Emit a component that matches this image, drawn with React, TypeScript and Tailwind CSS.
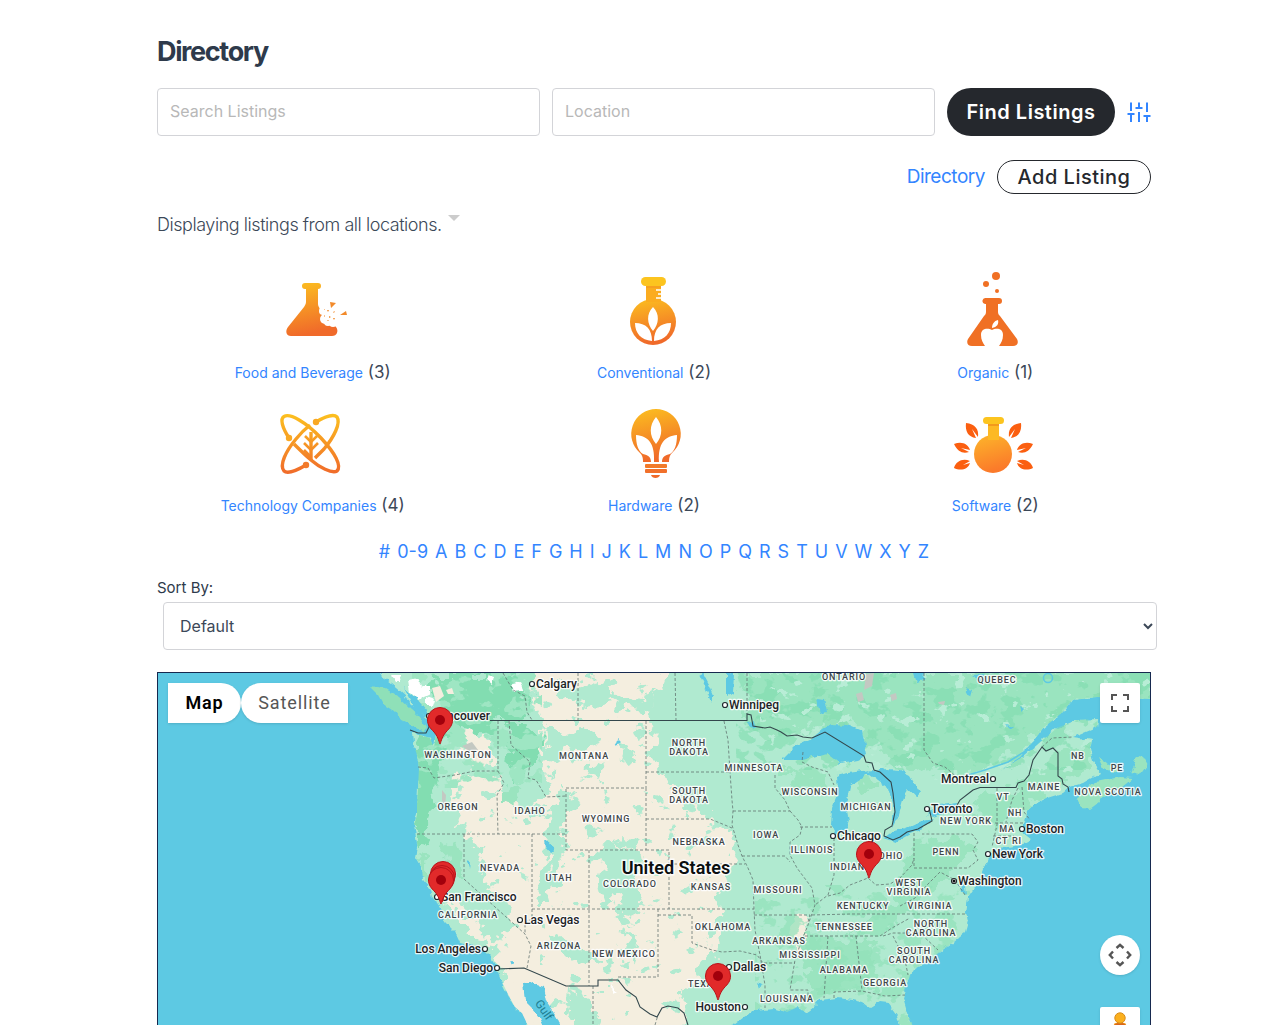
import React, { useState } from 'react';

const LETTERS = ['#', '0-9', ...'ABCDEFGHIJKLMNOPQRSTUVWXYZ'.split('')];

const FoodIcon = () => (
  <svg viewBox="0 0 100 80" className="h-20 w-[100px]" aria-hidden="true">
    <path d="M42 14h13a3 3 0 0 1 0 6v15c0 2 1 3 2 5l16 18c3 4 1 9-4 9H28c-5 0-6-5-3-9l16-20c1-2 2-3 2-5V20h-1a3 3 0 0 1 0-6z" fill="url(#gold)" />
    <g fill="#fff">
      <circle cx="60" cy="42" r="4" /><circle cx="62" cy="50" r="5" /><circle cx="68" cy="45" r="9" />
      <circle cx="70" cy="54" r="4" /><circle cx="65" cy="53" r="4" /><circle cx="60" cy="38" r="3" />
    </g>
    <g fill="#f28a2a">
      <path d="M67 33l6 1-5 5zM83 42l1 4-7 0zM64 41l2 0-1 2zM66 47l2 1-2 1zM71 42l1 1-2 1zM61 46l1 1-1 1zM70 49l2 0-1 2zM65 51l1 1-2 0zM61 40l1 1-1 0z" />
    </g>
  </svg>
);

const ConventionalIcon = () => (
  <svg viewBox="0 0 100 80" className="h-20 w-[100px]" aria-hidden="true">
    <circle cx="49" cy="53" r="23" fill="url(#gold)" />
    <path d="M42 15h15v18H42z" fill="#fbac1f" />
    <rect x="37" y="8" width="25" height="9" rx="4.5" fill="#fcc41f" />
    <path d="M42 17h15v2H42z" fill="#f6a01f" />
    <path d="M52 21h5M54 25h3M52 29h5" stroke="#fff" strokeWidth="1.6" />
    <path d="M49 38c7 7 6 17 0 24c-6-7-7-17 0-24zM31 54c11 0 17 6 17 18c-11-1-17-8-17-18zM67 54c-11 0-17 6-17 18c11-1 17-8 17-18z" fill="#fff" />
  </svg>
);

const OrganicIcon = () => (
  <svg viewBox="0 0 100 80" className="h-20 w-[100px]" aria-hidden="true">
    <g fill="#f07024">
      <circle cx="51" cy="7" r="4" /><circle cx="41" cy="15" r="3" /><circle cx="52" cy="22" r="2" />
      <path d="M41 29h13a3 3 0 0 1 0 6h-1v8c0 2 1 3 2 4l17 23c2 4 0 7-4 7H27c-4 0-6-3-4-7l16-23c1-1 2-2 2-4v-8h-1a3 3 0 0 1 1-6z" />
    </g>
    <path d="M47 61c4-2 11-2 11 5c0 5-2 8-4 11H40c-2-3-4-6-4-11c0-7 7-7 11-5zM47 59c0-4 2-7 6-8c1 4-1 7-6 8z" fill="#fff" />
  </svg>
);

const TechIcon = () => (
  <svg viewBox="0 0 100 80" className="h-20 w-[100px]" aria-hidden="true">
    <g fill="none" stroke="url(#goldPage)" strokeWidth="3.4">
      <path d="M26 36C19 25 17 17 21 14.500C27 11 43 20 58 36C72 51 79 64 74 69C69 72 56 65 48 58C42 53 36 47 31 42" />
      <path d="M53 20C63 14 71 12 74 15C78 21 71 35 61 47L52 56M43 63C33 69 24 72 21 69C16 63 23 49 33 37C37 32 42 27 47 23" />
      <path d="M48 30v28" />
      <path d="M42 34l6 6l6-6M41 41l7 7l7-7M41 48l7 7" strokeWidth="2.600" />
    </g>
    <g fill="#f9a823">
      <circle cx="53" cy="20" r="3.200" /><circle cx="26" cy="36" r="3.200" />
      <circle cx="43" cy="63" r="3.200" fill="#f27a2a" />
    </g>
  </svg>
);

const HardwareIcon = () => (
  <svg viewBox="0 0 100 80" className="h-20 w-[100px]" aria-hidden="true">
    <path d="M52 7a25 25 0 0 1 16 44c-2 2-3 4-3 9H39c0-5-1-7-3-9A25 25 0 0 1 52 7z" fill="url(#gold)" />
    <path d="M52 15c7 8 7 19 0 27c-7-8-7-19 0-27zM32 33c12 1 19 8 18 27h-3c0-5-3-7-8-8c-5-3-7-10-7-19zM73 33c-12 1-19 8-18 27h3c0-5 3-7 8-8c5-3 7-10 7-19z" fill="#fff" />
    <rect x="41" y="62" width="22" height="4" rx="1" fill="#f27a2a" />
    <rect x="41" y="67" width="22" height="4" rx="1" fill="#f1702a" />
    <path d="M47 73h9c-1 4-8 4-9 0z" fill="#f06a2a" />
  </svg>
);

const SIDE_LEAVES = 'M21 21c9 1 13 6 12 14l-6-8l4 9c-8-1-11-7-10-15zM9 42c8-3 14 0 16 6l-9-2l8 4c-6 2-11 0-15-8zM9 66c2-7 9-10 16-7l-7 4l7-2c-2 7-10 8-16 5z';

const SoftwareIcon = () => (
  <svg viewBox="0 0 100 80" className="h-20 w-[100px]" aria-hidden="true">
    <circle cx="48" cy="52" r="19" fill="url(#bright)" />
    <path d="M43 20h11v18H43z" fill="#fdb924" />
    <path d="M43 22h11v2H43z" fill="#f39a1c" />
    <rect x="38" y="15" width="21" height="7" rx="3.500" fill="#fcc41f" />
    <path d={SIDE_LEAVES} fill="#fb5f10" />
    <path d={SIDE_LEAVES} fill="#fb5f10" transform="translate(97 0) scale(-1 1)" />
  </svg>
);

const CATEGORIES = [
  { name: 'Food and Beverage', count: 3, Icon: FoodIcon },
  { name: 'Conventional', count: 2, Icon: ConventionalIcon },
  { name: 'Organic', count: 1, Icon: OrganicIcon },
  { name: 'Technology Companies', count: 4, Icon: TechIcon },
  { name: 'Hardware', count: 2, Icon: HardwareIcon },
  { name: 'Software', count: 2, Icon: SoftwareIcon },
];

// [label, centre x, baseline y]
const STATES: [string, number, number][] = [
  ['ONTARIO', 844, 680], ['QUEBEC', 997, 683], ['WASHINGTON', 458, 758], ['MONTANA', 584, 759],
  ['OREGON', 458, 810], ['IDAHO', 530, 814], ['WYOMING', 606, 822], ['NEVADA', 500, 871],
  ['UTAH', 559, 881], ['COLORADO', 630, 887], ['CALIFORNIA', 468, 918], ['ARIZONA', 559, 949],
  ['NEW MEXICO', 624, 957], ['NORTH', 689, 746], ['DAKOTA', 689, 755], ['SOUTH', 689, 794],
  ['DAKOTA', 689, 803], ['MINNESOTA', 754, 771], ['WISCONSIN', 810, 795], ['MICHIGAN', 866, 810],
  ['NEBRASKA', 699, 845], ['IOWA', 766, 838], ['ILLINOIS', 812, 853], ['INDIANA', 851, 870],
  ['OHIO', 891, 859], ['KANSAS', 711, 890], ['MISSOURI', 778, 893], ['KENTUCKY', 863, 909],
  ['OKLAHOMA', 723, 930], ['ARKANSAS', 779, 944], ['TENNESSEE', 844, 930], ['MISSISSIPPI', 810, 958],
  ['ALABAMA', 844, 973], ['GEORGIA', 885, 986], ['TEXAS', 704, 987], ['LOUISIANA', 787, 1002],
  ['WEST', 909, 886], ['VIRGINIA', 909, 895], ['VIRGINIA', 930, 909], ['NORTH', 931, 927],
  ['CAROLINA', 931, 936], ['SOUTH', 914, 954], ['CAROLINA', 914, 963], ['PENN', 946, 855],
  ['NEW YORK', 966, 824], ['VT', 1003, 800], ['NH', 1015, 816], ['MA', 1007, 832], ['CT', 1002, 844],
  ['RI', 1017, 844], ['MAINE', 1044, 790], ['NB', 1078, 759], ['PE', 1117, 771], ['NOVA SCOTIA', 1108, 795],
];

// [label, dot x, dot y, side of the dot that the label is on]
const CITIES: [string, number, number, 'start' | 'end'][] = [
  ['Calgary', 532, 684, 'start'], ['Vancouver', 429, 716, 'start'], ['Winnipeg', 725, 705, 'start'],
  ['San Francisco', 437, 897, 'start'], ['Las Vegas', 520, 920, 'start'], ['Los Angeles', 485, 949, 'end'],
  ['San Diego', 497, 968, 'end'], ['Chicago', 833, 836, 'start'], ['Toronto', 927, 809, 'start'],
  ['Montreal', 993, 779, 'end'], ['Boston', 1022, 829, 'start'], ['New York', 988, 854, 'start'],
  ['Washington', 954, 881, 'start'], ['Dallas', 729, 967, 'start'], ['Houston', 745, 1007, 'end'],
];

const PINS = [[440, 744], [443, 898], [442, 902], [441, 904], [869, 878], [718, 1000]];

const LAND =
  'M380 673L383 678L387 680L397 688L405 695L409 703L420 712L430 722L436 733L434 748L430 738L420 735L412 733L413 742L417 755L419 768L418 788L417 805L417 815L414 825L416 838L418 848L416 858L422 868L423 880L431 889L433 898L440 908L445 922L455 932L460 943L477 947L483 950L490 957L495 965L500 978L506 990L510 998L515 1007L522 1013L530 1030L545 1180L720 1180L722 1040L733 1025L743 1017L755 1010L773 1008L787 1012L798 1007L806 1013L815 1006L820 1000L837 998L853 1000L862 1002L870 1008L880 1002L888 1003L897 1015L902 1035L920 1070L924 1050L913 1025L907 1012L903 998L907 982L915 968L930 960L940 952L953 942L965 932L968 922L966 912L968 898L977 885L983 872L988 858L996 850L1007 847L1023 845L1032 840L1022 832L1025 822L1027 812L1033 805L1047 798L1063 793L1070 787L1083 783L1100 773L1093 762L1090 748L1092 740L1073 737L1097 727L1098 719L1077 720L1057 728L1037 745L1023 757L1000 770L1020 757L1033 742L1043 728L1063 712L1072 700L1097 697L1150 699L1300 699L1300 600L380 600z';

const BORDERS =
  'M410 730L418 733L426 733L429 727L428 717M490 720.5H747V714L751 715L753 726L765 728L770 727L777 730L781 732L787 736L797 735L803 737L812 738L825 732L864 756L866 762L872 763L874 770L880 772L891 782L893 793L895 812L892 826L885 830L884 836L893 840L900 837L907 832L918 829L932 821L929 808M956 807L960 800L973 790L980 787.500L1016 787.500L1018 783L1024 781L1029 775L1033 760L1042 747L1046 751L1053 748L1058 753L1058 776L1062 779L1063 784L1068 787L1069 792M497 969L524 968L566 986H598V980H618L626 990L636 997L640 1007L650 1014L657 1017L662 1008L668 1006L678 1008L684 1013L688 1025';

const STATE_LINES =
  'M418 767L428 768L434 778L455 775L475 771H498M498 721V771L504 783L497 795L498 834M417 834H566M464 834V879L525 934L531 946L527 968M532 834V909H754M532 909V919L525 922V934M589 850V986M566 788H646V850H566zM509 721L511 745L530 762L528 778L536 780L546 797L566 796M646 721V788M646 819H710L720 823L732 828M646 772H730M724 721L728 740L730 772L732 800L733 811L732 825L738 845L742 856L748 868L753 880L754 909L755 930L760 955L765 985L765 1008M669 864H745M646 850H669V909M733 811H790M742 856L785 856L790 862M658 909V977H618M658 915H692V943L712 950L722 952L740 951L757 955L763 963H795M754 915H810L808 922M790 811L798 820L802 827L800 835L790 842L790 855L797 868L806 880L812 888L815 905L808 925L800 945L795 960L790 990H808V998M800 827H832M803 752L802 762L812 767L828 772L834 785M775 775L775 788L785 800L790 811M834 838V875L828 895L815 905M812 915L850 914H967M805 936H880L892 928L910 918M828 936L824 998M856 936L862 990M834 998V992L862 991L885 996L905 995M868 842V878M828 896L840 893L850 885L868 878L876 885L890 884L900 878L912 865L914 858M914 833V868H968L978 860L973 850L978 842L972 834H922M997 788V825L992 847M1018 788L1012 800L1006 822M1022 787L1024 812L1030 820M995 823H1025M993 836H1014V843M900 906L915 898L928 884L940 872L955 880L965 895M883 936L893 933H920L938 950M893 936L905 960L908 975M578 673V720M675 673L676 720M747 673V714M924 673V750L933 763L945 767L958 778M503 673L513 690L525 696L527 712L532 720M1042 747L1052 738L1073 737M593 986V1025M655 1025L658 1015';

const USMap = () => (
  <svg
    viewBox="158 673 992 500"
    preserveAspectRatio="xMidYMin slice"
    className="block h-full w-full font-[Roboto,sans-serif]"
    role="img"
    aria-label="Map of listings"
  >
    <defs>
      <clipPath id="land"><path d={LAND} /></clipPath>
      <filter id="rough" x="0" y="0" width="100%" height="100%">
        <feTurbulence type="fractalNoise" baseFrequency="0.08" numOctaves="3" seed="4" result="n" />
        <feDisplacementMap in="SourceGraphic" in2="n" scale="26" xChannelSelector="R" yChannelSelector="G" />
      </filter>
      <filter id="coast" x="0" y="0" width="100%" height="100%">
        <feTurbulence type="fractalNoise" baseFrequency="0.14" numOctaves="2" seed="9" result="n" />
        <feDisplacementMap in="SourceGraphic" in2="n" scale="6" xChannelSelector="R" yChannelSelector="G" />
      </filter>
      {/* patches of woodland, cut out of the noise by a hard alpha threshold */}
      <filter id="patches" x="0" y="0" width="100%" height="100%">
        <feTurbulence type="fractalNoise" baseFrequency="0.045 0.06" numOctaves="4" seed="21" />
        <feColorMatrix values="0 0 0 0 0  0 0 0 0 0  0 0 0 0 0  24 0 0 0 -13" result="m" />
        <feComposite in="SourceGraphic" in2="m" operator="in" />
      </filter>
      <filter id="specks" x="0" y="0" width="100%" height="100%">
        <feTurbulence type="fractalNoise" baseFrequency="0.06 0.08" numOctaves="4" seed="7" />
        <feColorMatrix values="0 0 0 0 0  0 0 0 0 0  0 0 0 0 0  0 26 0 0 -17.500" result="m" />
        <feComposite in="SourceGraphic" in2="m" operator="in" />
      </filter>
    </defs>

    <rect x="0" y="500" width="1400" height="800" fill="#5dc9e3" />
    <g filter="url(#coast)">
      <path d={LAND} fill="#b0ead0" />
      <path d="M370 687L385 689L398 697L410 708L419 716L427 728L424 732L412 725L401 720L395 712L383 704L378 695z" fill="#8fe0b8" />
      <path d="M1077 799L1082 790L1096 782L1120 777L1133 778L1121 788L1104 795L1098 803L1090 809L1082 808zM1098 757L1108 764L1120 768L1117 773L1103 768zM1131 773L1138 755L1142 756L1147 765L1140 775z" fill="#9ae4bf" />
    </g>

    <g clipPath="url(#land)">
      <g filter="url(#rough)">
        {/* dry interior */}
        <path d="M528 668L650 668L672 675L655 700L648 716L655 735L650 765L668 780L690 792L684 812L712 822L735 842L728 850L738 862L722 880L716 905L728 915L713 930L714 950L700 966L692 985L682 1003L688 1200L500 1200L502 975L496 962L500 945L480 942L500 938L520 930L505 905L488 885L480 855L466 835L460 815L450 795L452 778L480 773L500 775L506 800L520 812L540 798L552 790L548 770L540 745L545 725L535 705z" fill="#f4eedf" />
        <path d="M458 732L470 730L492 740L497 762L474 768L462 758z" fill="#f4eedf" />
        <path d="M448 895L458 905L470 918L486 930L492 942L476 940L464 925L452 912z" fill="#f4eedf" />
        <path d="M512 980L524 985L530 1008L548 1030L536 1034L520 1010z" fill="#f4eedf" />
        <path d="M798 915L808 914L804 930L800 950L796 950L794 935zM690 810L712 812L705 828L690 826z" fill="#f4eedf" />
        {/* uplands and farmland in the interior */}
        <path d="M545 728L562 735L582 726L600 740L585 750L565 745L560 762L548 760zM562 786L578 792L574 806L566 812L560 835L566 850L556 870L552 885L545 905L536 905L542 880L550 860L544 840L550 815zM598 852L618 842L630 850L640 858L634 880L642 895L636 925L624 918L618 895L604 898L594 882L604 868zM548 932L562 938L580 950L602 958L600 968L575 960L552 945zM570 990L590 998L600 1025L580 1040L568 1010zM628 930L636 940L632 965L622 960zM555 678L575 690L600 682L612 700L585 705L562 698zM610 690L640 700L660 690L650 712L620 708zM590 760L605 768L600 782L588 776zM625 745L636 752L632 765L620 760zM616 838L640 842L632 850zM525 808L545 806L535 820z" fill="#b0ead0" />
        {/* forest */}
        <path d="M416 735L440 738L450 752L440 770L436 790L428 812L432 830L420 850L412 850L412 800zM506 722L525 722L545 740L536 760L528 770L514 782L508 760zM440 673L520 673L530 695L522 715L500 722L480 735L465 725L458 740L440 738L445 710L430 690z" fill="#82ddb1" />
        <path d="M505 785L520 790L515 810L505 805zM440 840L455 845L462 880L450 870zM416 855L425 862L432 885L424 885z" fill="#9ae4bf" />
        <path d="M748 673L1000 673L1150 668L1150 700L1070 705L1040 735L1000 762L960 780L925 765L915 772L900 765L870 740L850 722L825 722L790 735L765 740L748 725zM782 770L830 772L828 790L800 790zM985 795L1015 790L1060 750L1095 745L1090 765L1050 795L1020 808L998 830L985 820L970 805zM915 840L960 838L960 865L920 900L880 935L850 935L890 905zM925 850L975 842L978 852L940 868zM858 775L880 780L876 790L860 792zM800 935L870 940L880 990L810 990z" fill="#9ae4bf" />
      </g>
      <rect x="736" y="660" width="420" height="110" fill="#80ddb0" filter="url(#patches)" opacity=".6" />
      <rect x="755" y="885" width="215" height="140" fill="#92e2ba" filter="url(#patches)" opacity=".7" />
      <rect x="412" y="668" width="130" height="120" fill="#9ee6c3" filter="url(#patches)" />
      <rect x="540" y="670" width="190" height="350" fill="#b0ead0" filter="url(#specks)" />
      <rect x="440" y="760" width="100" height="160" fill="#b0ead0" filter="url(#specks)" />
      <rect x="760" y="670" width="400" height="110" fill="#b8edd6" filter="url(#specks)" />
    </g>

    <g fill="#fff" filter="url(#coast)">
      <path d="M391 674L400 674L402 682L396 682zM408 680L418 678L422 686L430 686L430 694L418 700L410 692zM426 697L434 700L432 706L426 704zM488 674L494 676L492 685L486 680zM512 684L520 682L524 690L514 692zM612 985L617 992L613 995z" />
    </g>
    <path d="M432 688L440 686L444 696L436 702zM446 690L452 688L454 694L448 694z" fill="#f4eedf" />
    <path d="M462 746L472 742L478 750L470 752zM442 790L446 795L445 808L442 800zM856 694L862 692L864 700L858 702zM866 674L874 673L872 686L864 690zM890 695L896 693L897 699L892 701zM938 702L945 701L944 705L939 704z" fill="#c3c8c2" />

    <g fill="#5dc9e3" filter="url(#coast)">
      <path d="M782 760L797 745L812 738L822 730L830 724L847 725L862 731L867 755L857 760L840 763L827 753L813 757L803 760z" />
      <path d="M837 776L848 773L870 770L862 778L850 786L846 805L849 820L845 832L836 835L831 825L832 808L838 792z" />
      <path d="M866 772L887 769L900 770L910 775L920 792L917 797L907 788L903 800L899 815L892 828L894 808L888 788L877 780z" />
      <path d="M884 838L893 831L905 828L918 822L933 819L924 828L910 834L896 842z" />
      <path d="M928 814L940 805L957 803L958 807L947 812L933 817z" />
      <path d="M524 983L533 981L538 985L544 987L547 1002L552 1010L558 1020L565 1040L550 1040L540 1018L532 1008L526 1002z" />
      <path d="M545 841L549 842L554 850L552 854L546 847z" />
      <path d="M703 673L709 684L714 696L711 701L706 689L699 675zM727 673L734 674L733 693L727 697zM817 699L824 700L827 712L820 714zM748 722L754 720L756 728L750 727z" />
      <path d="M914 673L924 673L923 680L917 682zM972 676L986 675L980 681zM965 688L972 690L970 697zM1005 725L1014 727L1010 730zM1020 706L1025 709L1022 712z" />
      <path d="M467 861L470 862L469 868zM618 740L621 738L620 744L614 746zM510 960L514 963L512 966zM404 688L418 700L428 712L424 716L414 708zM962 878L965 885L966 896L963 892zM758 983L762 985L760 989z" />
    </g>
    <path d="M958 778L985 770L1008 762L1024 752L1034 742" fill="none" stroke="#5dc9e3" strokeWidth="1.500" />
    <circle cx="1048" cy="678" r="4.500" fill="none" stroke="#5dc9e3" strokeWidth="1.500" />

    <path d={STATE_LINES} fill="none" stroke="#5e6f6c" strokeWidth="1" strokeDasharray="3 2" opacity=".75" />
    <path d={BORDERS} fill="none" stroke="#33474c" strokeWidth="1.100" />

    <g fill="#3f4649" stroke="#ffffff" strokeOpacity=".85" strokeWidth="2.500" strokeLinejoin="round" className="text-[9px] font-medium tracking-widest [paint-order:stroke]">
      {STATES.map(([name, x, y], i) => (
        <text key={i} x={x} y={y} textAnchor="middle">{name}</text>
      ))}
    </g>
    <text x="544" y="1014" fill="#1f7f94" transform="rotate(55 544 1010)" textAnchor="middle" className="text-xs">Gulf</text>

    {CITIES.map(([name, x, y, side]) => (
      <g key={name}>
        <circle cx={x} cy={y} r="2.500" fill="#fff" stroke="#202a2e" strokeWidth="1.200" />
        {name === 'Washington' && <circle cx={x} cy={y} r="1.500" fill="#111" />}
        <text
          x={side === 'start' ? x + 4 : x - 4}
          y={y + 4}
          textAnchor={side}
          fill="#1d2326"
          stroke="#ffffff"
          strokeOpacity=".85"
          strokeWidth="2.500"
          strokeLinejoin="round"
          className="text-xs font-medium [paint-order:stroke]"
        >
          {name}
        </text>
      </g>
    ))}
    <text x="676" y="874" textAnchor="middle" fill="#0b0f10" stroke="#fff" strokeWidth="3" strokeOpacity=".85" className="text-lg font-semibold [paint-order:stroke]">United States</text>

    {PINS.map(([x, y], i) => (
      <g key={i} transform={`translate(${x} ${y})`}>
        <path d="M0 0C-1 -1 -1 -6 -6 -12C-10 -16 -12.500 -19 -12.500 -24A12.500 12.500 0 0 1 12.500 -24C12.500 -19 10 -16 6 -12C1 -6 1 -1 0 0z" fill="#e12a2a" stroke="#b8141a" />
        <circle cy="-24" r="5" fill="#a2000c" />
      </g>
    ))}
  </svg>
);

const App: React.FC = () => {
  const [search, setSearch] = useState('');
  const [location, setLocation] = useState('');
  const [sort, setSort] = useState('default');

  return (
    <div className="bg-white pt-8 pr-[134px] pb-8 pl-[157px] font-[Inter,sans-serif] text-lg text-[#3c4858]">
      {/* Gradients shared by the category icons */}
      <svg className="absolute h-0 w-0" aria-hidden="true">
        <defs>
          <linearGradient id="gold" x1="0" y1="0" x2="0.2" y2="1">
            <stop offset="0" stopColor="#fcc01f" /><stop offset="1" stopColor="#f06a2a" />
          </linearGradient>
          <linearGradient id="bright" x1="0" y1="0" x2="0.3" y2="1">
            <stop offset="0" stopColor="#fdb62a" /><stop offset="1" stopColor="#fb7a2a" />
          </linearGradient>
          <linearGradient id="goldPage" gradientUnits="userSpaceOnUse" x1="45" y1="12" x2="45" y2="72">
            <stop offset="0" stopColor="#fcc01f" /><stop offset="1" stopColor="#f06a2a" />
          </linearGradient>
        </defs>
      </svg>

      <h1 className="text-[27px] leading-10 font-bold tracking-tighter text-[#2e3a4b]">Directory</h1>

      <form className="mt-4 flex items-center gap-3" onSubmit={(e) => e.preventDefault()}>
        <input
          type="text"
          aria-label="Search Listings"
          placeholder="Search Listings"
          value={search}
          onChange={(e) => setSearch(e.target.value)}
          className="h-12 min-w-0 flex-1 rounded border border-[#d3d4d8] px-3 pb-0.5 text-base placeholder:text-[#b8b8b8]"
        />
        <input
          type="text"
          aria-label="Location"
          placeholder="Location"
          value={location}
          onChange={(e) => setLocation(e.target.value)}
          className="h-12 min-w-0 flex-1 rounded border border-[#d3d4d8] px-3 pb-0.5 text-base placeholder:text-[#b8b8b8]"
        />
        <button type="submit" className="h-12 w-[168px] rounded-full bg-[#25282d] text-xl font-semibold tracking-wide whitespace-nowrap text-white">
          Find Listings
        </button>
        <button type="button" aria-label="Advanced filters" className="text-[#3385ff]">
          <svg viewBox="0 0 24 24" className="h-6 w-6" fill="none" stroke="currentColor" strokeWidth="2">
            <path d="M4 22v-8M4 11V2.500M12 22V12M12 8V2.500M20 22v-6M20 12V2.500M.5 14h7M8.500 8h7M16.500 16h7" />
          </svg>
        </button>
      </form>

      <div className="mt-6 flex items-center justify-end gap-3">
        <a href="#directory" className="text-[19px] leading-8 tracking-tight text-[#3385ff]">Directory</a>
        <button type="button" className="h-[34px] w-[154px] rounded-full border border-[#25282d] text-xl leading-8 font-medium tracking-wide whitespace-nowrap text-[#25282d]">
          Add Listing
        </button>
      </div>

      <div className="mt-4 flex gap-1.5">
        <p className="leading-[30px] font-light tracking-tight">Displaying listings from all locations.</p>
        <svg viewBox="0 0 12 6" className="mt-[5px] h-1.5 w-3 text-[#cccccc]" aria-hidden="true">
          <path d="M0 0h12l-6 6z" fill="currentColor" />
        </svg>
      </div>

      <div className="mt-[29px] grid grid-cols-3 gap-x-[30px] gap-y-4">
        {CATEGORIES.map(({ name, count, Icon }) => (
          <div key={name} className="flex flex-col items-center">
            <Icon />
            <p className="mt-[9px] text-[17px] leading-7 whitespace-nowrap">
              <a href="#category" className="text-sm text-[#3385ff]">{name}</a> ({count})
            </p>
          </div>
        ))}
      </div>

      <nav aria-label="Listings by letter" className="mt-[19px] flex flex-wrap justify-center gap-x-[7px] leading-7 text-[#3385ff]">
        {LETTERS.map((l) => (
          <a key={l} href="#letter">{l}</a>
        ))}
      </nav>

      <div className="mt-2">
        <label htmlFor="sort" className="block text-[15px] leading-7 text-[#2e3a4b]">Sort By:</label>
        <select
          id="sort"
          value={sort}
          onChange={(e) => setSort(e.target.value)}
          className="ml-1.5 h-12 w-full rounded border border-[#d3d4d8] bg-white px-3 text-base text-[#3c4858]"
        >
          <option value="default">Default</option>
          <option value="title">Title</option>
        </select>
      </div>

      <div className="relative mt-[22px] h-[500px] overflow-hidden border border-[#16294f]">
        <USMap />
        <div className="absolute top-2.5 left-2.5 flex h-10 font-[Roboto,sans-serif] text-lg tracking-wider">
          <button type="button" className="w-[73px] rounded-l-xs rounded-r-full bg-white font-semibold text-black shadow-sm">Map</button>
          <button type="button" className="w-[107px] rounded-l-full rounded-r-xs bg-white text-[#565656] shadow-sm">Satellite</button>
        </div>
        <button type="button" aria-label="Toggle fullscreen view" className="absolute top-2.5 right-2.5 flex h-10 w-10 items-center justify-center rounded-xs bg-white shadow-sm">
          <svg viewBox="0 0 18 18" className="h-[18px] w-[18px]" fill="#555">
            <path d="M0 0v6h2V2h4V0zM18 0h-6v2h4v4h2zM16 12v4h-4v2h6v-6zM2 12H0v6h6v-2H2z" />
          </svg>
        </button>
        <button type="button" aria-label="Map camera controls" className="absolute top-[262px] right-2.5 flex h-10 w-10 items-center justify-center rounded-full bg-white shadow-sm">
          <svg viewBox="0 0 24 24" className="h-6 w-6" fill="none" stroke="#555" strokeWidth="2.400">
            <path d="M8.500 5L12 1.800L15.500 5M8.500 19L12 22.200L15.500 19M5 8.500L1.800 12L5 15.500M19 8.500L22.200 12L19 15.500" />
          </svg>
        </button>
        <button type="button" aria-label="Street View" className="absolute top-[334px] right-2.5 flex h-10 w-10 justify-center rounded-xs bg-white pt-1 shadow-sm">
          <svg viewBox="0 0 20 30" className="h-[30px] w-5">
            <path d="M4 13c2-2 10-2 12 0l1 7h-3l-1 9H7l-1-9H3z" fill="#fbb01e" />
            <path d="M4 13l4-1h4l4 1-6 4z" fill="#d9661a" />
            <circle cx="10" cy="7" r="5.200" fill="#fbb01e" stroke="#d98d1a" />
          </svg>
        </button>
      </div>
    </div>
  );
};

export default App;
